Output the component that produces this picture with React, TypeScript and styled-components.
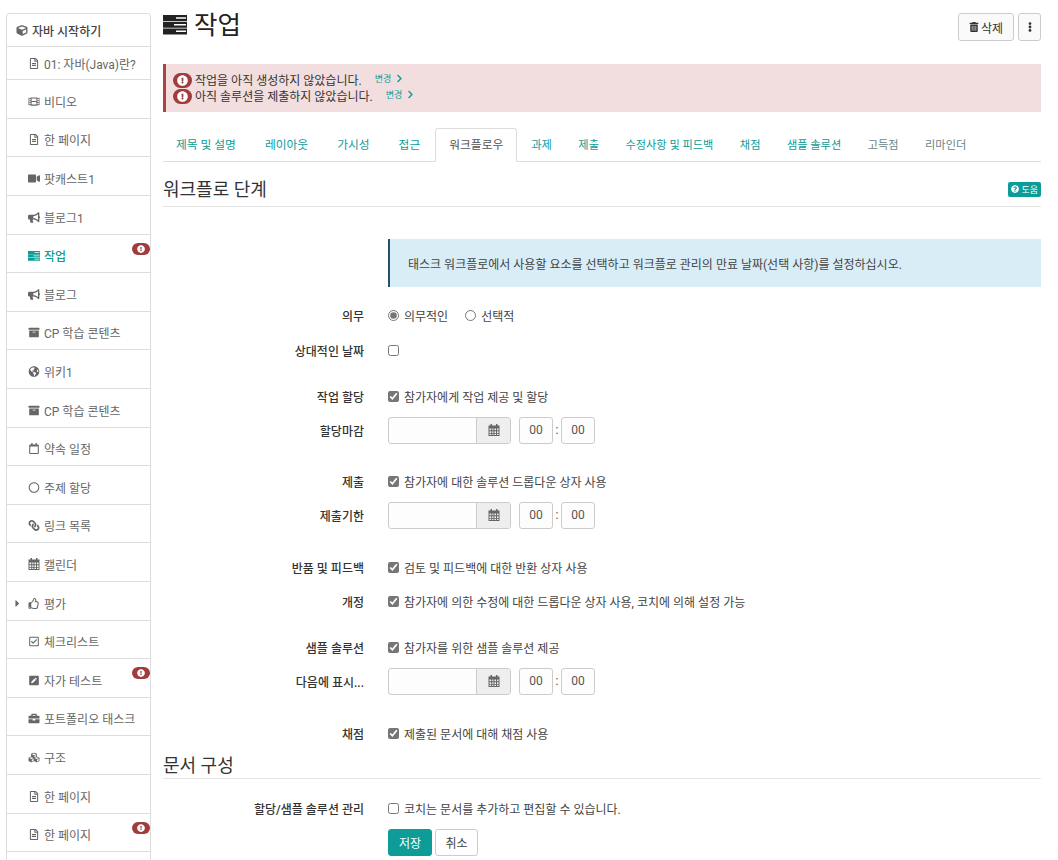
import React from "react";
import styled, { createGlobalStyle } from "styled-components";
import {
  FaArchive,
  FaBriefcase,
  FaBullhorn,
  FaCaretRight,
  FaChevronRight,
  FaCube,
  FaCubes,
  FaExclamationCircle,
  FaEllipsisV,
  FaFilm,
  FaGlobeAmericas,
  FaLink,
  FaPenSquare,
  FaQuestionCircle,
  FaRegCalendar,
  FaRegCheckSquare,
  FaRegCircle,
  FaRegFileAlt,
  FaRegThumbsUp,
  FaTrashAlt,
  FaVideo,
} from "react-icons/fa";

const TEAL = "#0d9c97";
const FONT = `Roboto, "Noto Sans CJK KR", "Noto Sans", sans-serif`;

const GlobalStyle = createGlobalStyle`
  html, body {
    margin: 0;
    padding: 0;
    background: #fff;
    overflow: hidden;
  }
  body {
    font-family: ${FONT};
    font-size: 12px;
    color: #333;
  }
`;

const Page = styled.div`
  display: flex;
  align-items: flex-start;
  gap: 12px;
  width: 1058px;
  height: 860px;
  padding: 13px 17px 0 6px;
  box-sizing: border-box;
  overflow: hidden;
`;

const Sidebar = styled.nav`
  flex: 0 0 145px;
  box-sizing: border-box;
  border: 1px solid #ddd;
  border-radius: 3px 3px 0 0;
`;

const NavRow = styled.div<{ $height: number; $top?: boolean; $active?: boolean }>`
  position: relative;
  display: flex;
  align-items: center;
  gap: 4px;
  box-sizing: border-box;
  height: ${(p) => p.$height}px;
  padding-left: ${(p) => (p.$top ? 9 : 21)}px;
  padding-top: ${(p) => (p.$height > 33 ? 4 : 0)}px;
  border-bottom: 1px solid #ddd;
  font-size: 12px;
  font-weight: ${(p) => (p.$active || p.$top ? 500 : 400)};
  color: ${(p) => (p.$active ? TEAL : p.$top ? "#444" : "#666")};
  white-space: nowrap;

  svg {
    flex: 0 0 12px;
    font-size: 11px;
    color: ${(p) => (p.$active ? TEAL : "#666")};
  }
`;

const NavArrow = styled.span`
  position: absolute;
  left: 5px;
  top: 16px;
  font-size: 9px;
  line-height: 1;
`;

const Pill = styled.span<{ $small?: boolean }>`
  display: inline-flex;
  align-items: center;
  justify-content: center;
  flex: none;
  width: ${(p) => (p.$small ? 18 : 19)}px;
  height: ${(p) => (p.$small ? 12 : 15)}px;
  border-radius: 8px;
  background: #a23b3b;

  svg {
    flex: none;
    color: #fff;
    font-size: ${(p) => (p.$small ? 8 : 11)}px;
  }
`;

const AlertPill = styled(Pill)`
  margin-top: 2px;
`;

const NavBadge = styled.span`
  position: absolute;
  top: 8px;
  right: 0;
  display: flex;
`;

const FlippedLink = styled(FaLink)`
  transform: scaleX(-1);
`;

const Main = styled.main`
  flex: 1;
  min-width: 0;
`;

const TitleBar = styled.header`
  display: flex;
  justify-content: space-between;
  align-items: flex-start;
  height: 51px;
`;

const Title = styled.h1`
  display: flex;
  align-items: center;
  gap: 7px;
  height: 23px;
  margin: 0;
  font-size: 25.5px;
  font-weight: 400;
  color: #222;
`;

const TitleText = styled.span`
  margin-top: -4px;
`;

const TitleActions = styled.div`
  display: flex;
  gap: 4px;
`;

const ToolButton = styled.button<{ $narrow?: boolean }>`
  display: inline-flex;
  align-items: center;
  justify-content: center;
  gap: 2px;
  width: ${(p) => (p.$narrow ? 23 : 56)}px;
  height: 28px;
  padding: 0;
  border: 1px solid #ccc;
  border-radius: 3px;
  background: #fafafa;
  font: inherit;
  font-size: 12px;
  color: #333;

  svg {
    font-size: 10px;
  }
`;

const Alert = styled.section`
  display: flex;
  flex-direction: column;
  justify-content: center;
  height: 48px;
  padding: 0 0 2px 7px;
  box-sizing: border-box;
  border-left: 3px solid #a94442;
  background: #f2dede;
`;

const AlertLine = styled.div`
  display: flex;
  align-items: center;
  height: 16px;
  gap: 3px;
  font-size: 12px;
  color: #333;
`;

const ChangeLink = styled.a`
  display: inline-flex;
  align-items: center;
  gap: 4px;
  margin: -2px 0 0 10px;
  font-size: 9px;
  color: ${TEAL};

  svg {
    font-size: 9px;
  }
`;

const Tabs = styled.div`
  display: flex;
  height: 34px;
  margin-top: 16px;
  box-sizing: border-box;
  border-bottom: 1px solid #ddd;
`;

const Tab = styled.a<{ $active?: boolean; $muted?: boolean; $dense?: boolean }>`
  display: flex;
  align-items: center;
  box-sizing: border-box;
  height: ${(p) => (p.$active ? 34 : 33)}px;
  padding: 0 ${(p) => (p.$dense ? 12 : 13)}px ${(p) => (p.$active ? 3 : 2)}px;
  margin-right: ${(p) => (p.$dense ? 0.5 : 1)}px;
  border: 1px solid ${(p) => (p.$active ? "#ddd" : "transparent")};
  border-bottom-color: ${(p) => (p.$active ? "#fff" : "transparent")};
  border-radius: 3px 3px 0 0;
  background: ${(p) => (p.$active ? "#fff" : "transparent")};
  font-size: ${(p) => (p.$dense ? 11.2 : 11.75)}px;
  white-space: nowrap;
  color: ${(p) => (p.$active ? "#555" : p.$muted ? "#6c8583" : TEAL)};

  &:first-child {
    margin-left: -1px;
  }
`;

const SectionHead = styled.div<{ $top: number; $height: number; $pad: number }>`
  display: flex;
  justify-content: space-between;
  align-items: center;
  box-sizing: border-box;
  height: ${(p) => p.$height}px;
  margin-top: ${(p) => p.$top}px;
  padding-bottom: ${(p) => p.$pad}px;
  border-bottom: 1px solid #e5e5e5;
`;

const SectionTitle = styled.h3`
  margin: 0;
  font-size: 18px;
  font-weight: 400;
  color: #333;
`;

const HelpBadge = styled.a`
  display: inline-flex;
  align-items: center;
  gap: 2px;
  height: 15px;
  margin-top: 2px;
  padding: 0 3px;
  border-radius: 2px;
  background: ${TEAL};
  color: #fff;
  font-size: 9px;

  svg {
    font-size: 8px;
  }
`;

const InfoBox = styled.div`
  display: flex;
  align-items: center;
  height: 48px;
  margin: 32px 0 0 225px;
  padding-left: 18px;
  box-sizing: border-box;
  border-left: 2px solid #245269;
  background: #d9edf7;
  font-size: 12px;
  color: #444;
`;

const FormRow = styled.div<{ $top: number; $tall?: boolean }>`
  display: grid;
  grid-template-columns: 201px 1fr;
  column-gap: 24px;
  align-items: center;
  height: ${(p) => (p.$tall ? 28 : 20)}px;
  margin-top: ${(p) => p.$top}px;
`;

const Label = styled.label`
  text-align: right;
  font-size: 12px;
  font-weight: 500;
  color: #333;
  white-space: nowrap;
`;

const Control = styled.div`
  display: flex;
  align-items: center;
  font-size: 12px;
  color: #444;
  white-space: nowrap;
`;

const Check = styled.input.attrs({ type: "checkbox" })`
  width: 11px;
  height: 11px;
  margin: 0 5px 0 0;
  accent-color: #767676;
`;

const Radio = styled.input.attrs({ type: "radio" })`
  width: 11px;
  height: 11px;
  margin: 0 5px 0 0;
  accent-color: #767676;
`;

const RadioText = styled.span`
  margin-right: 17px;
`;

const DateBox = styled.div`
  display: flex;
  width: 123px;
  height: 27px;
  box-sizing: border-box;
  border: 1px solid #ccc;
  border-radius: 3px;
  overflow: hidden;
  background: #fdfdfd;
`;

const DateInput = styled.div`
  flex: 1;
`;

const DateAddon = styled.div`
  display: flex;
  align-items: center;
  justify-content: center;
  width: 33px;
  border-left: 1px solid #ccc;
  background: #eee;
  color: #666;
`;

const TimeBox = styled.div<{ $first?: boolean }>`
  display: flex;
  align-items: center;
  justify-content: center;
  width: 34px;
  height: 27px;
  margin-left: ${(p) => (p.$first ? 8 : 0)}px;
  box-sizing: border-box;
  border: 1px solid #ccc;
  border-radius: 3px;
  background: #fdfdfd;
  font-size: 12px;
  color: #555;
`;

const TimeColon = styled.span`
  width: 8px;
  text-align: center;
  color: #555;
`;

const Actions = styled.div`
  display: flex;
  gap: 3px;
  margin: 11px 0 0 225px;
`;

const ActionButton = styled.button<{ $primary?: boolean }>`
  height: 27px;
  width: ${(p) => (p.$primary ? 44 : 43)}px;
  padding: 0;
  box-sizing: border-box;
  border: 1px solid ${(p) => (p.$primary ? TEAL : "#ccc")};
  border-radius: 3px;
  background: ${(p) => (p.$primary ? TEAL : "#fff")};
  color: ${(p) => (p.$primary ? "#fff" : "#444")};
  font: inherit;
  font-size: 12px;
`;

// three stacked bars with a slot near the right end, like the old fa-tasks
const TasksIcon = ({ size = 12 }: { size?: number }) => (
  <svg width={size} height={size} viewBox="0 0 24 24" fill="currentColor">
    <path
      fillRule="evenodd"
      d="M0 2h24v6H0zM13 4.2v1.5h10V4.2zM0 8.7h24v6H0zM11 11v1.5h12V11zM0 15.4h24v6H0zM13 17.6v1.5h10v-1.5z"
    />
  </svg>
);

// grid calendar, the package's only has a solid header
const GridCalendar = () => (
  <svg width="12" height="12" viewBox="0 0 24 24" fill="currentColor">
    <path
      fillRule="evenodd"
      d="M5 0h3v3h8V0h3v3h4v21H1V3h4zM3 9v3.5h3.5V9zM8.5 9v3.5H11V9zM13 9v3.5h3V9zM18 9v3.5h3V9zM3 14.5V18h3.5v-3.5zM8.5 14.5V18H11v-3.5zM13 14.5V18h3v-3.5zM18 14.5V18h3v-3.5zM3 19.5V22h3.5v-2.5zM8.5 19.5V22H11v-2.5zM13 19.5V22h3v-2.5zM18 19.5V22h3v-2.5z"
    />
  </svg>
);

type NavItem = {
  label: string;
  icon: React.ReactNode;
  height: number;
  top?: boolean;
  active?: boolean;
  badge?: boolean;
  arrow?: boolean;
};

const navItems: NavItem[] = [
  { label: "자바 시작하기", icon: <FaCube />, height: 33, top: true },
  { label: "01: 자바(Java)란?", icon: <FaRegFileAlt />, height: 33 },
  { label: "비디오", icon: <FaFilm />, height: 39 },
  { label: "한 페이지", icon: <FaRegFileAlt />, height: 38 },
  { label: "팟캐스트1", icon: <FaVideo />, height: 39 },
  { label: "블로그1", icon: <FaBullhorn />, height: 39 },
  { label: "작업", icon: <TasksIcon />, height: 38, active: true, badge: true },
  { label: "블로그", icon: <FaBullhorn />, height: 39 },
  { label: "CP 학습 콘텐츠", icon: <FaArchive />, height: 38 },
  { label: "위키1", icon: <FaGlobeAmericas />, height: 39 },
  { label: "CP 학습 콘텐츠", icon: <FaArchive />, height: 39 },
  { label: "약속 일정", icon: <FaRegCalendar />, height: 38 },
  { label: "주제 할당", icon: <FaRegCircle />, height: 39 },
  { label: "링크 목록", icon: <FlippedLink />, height: 38 },
  { label: "캘린더", icon: <GridCalendar />, height: 39 },
  { label: "평가", icon: <FaRegThumbsUp />, height: 39, arrow: true },
  { label: "체크리스트", icon: <FaRegCheckSquare />, height: 38 },
  { label: "자가 테스트", icon: <FaPenSquare />, height: 39, badge: true },
  { label: "포트폴리오 태스크", icon: <FaBriefcase />, height: 38 },
  { label: "구조", icon: <FaCubes />, height: 39 },
  { label: "한 페이지", icon: <FaRegFileAlt />, height: 39 },
  { label: "한 페이지", icon: <FaRegFileAlt />, height: 38, badge: true },
  { label: "", icon: null, height: 20 },
];

const tabs = [
  "제목 및 설명",
  "레이아웃",
  "가시성",
  "접근",
  "워크플로우",
  "과제",
  "제출",
  "수정사항 및 피드백",
  "채점",
  "샘플 솔루션",
  "고득점",
  "리마인더",
];

const DateTime = () => (
  <Control>
    <DateBox>
      <DateInput />
      <DateAddon>
        <GridCalendar />
      </DateAddon>
    </DateBox>
    <TimeBox $first>00</TimeBox>
    <TimeColon>:</TimeColon>
    <TimeBox>00</TimeBox>
  </Control>
);

const CheckRow = ({ top, label, text, checked = true }: { top: number; label: string; text: string; checked?: boolean }) => (
  <FormRow $top={top}>
    <Label>{label}</Label>
    <Control>
      <Check defaultChecked={checked} />
      {text}
    </Control>
  </FormRow>
);

const DateRow = ({ label }: { label: string }) => (
  <FormRow $top={10} $tall>
    <Label>{label}</Label>
    <DateTime />
  </FormRow>
);

export default function App() {
  return (
    <>
      <GlobalStyle />
      <Page>
        <Sidebar>
          {navItems.map((item, i) => (
            <NavRow key={i} $height={item.height} $top={item.top} $active={item.active}>
              {item.arrow && (
                <NavArrow>
                  <FaCaretRight />
                </NavArrow>
              )}
              {item.icon}
              {item.label}
              {item.badge && (
                <NavBadge>
                  <Pill $small>
                    <FaExclamationCircle />
                  </Pill>
                </NavBadge>
              )}
            </NavRow>
          ))}
        </Sidebar>

        <Main>
          <TitleBar>
            <Title>
              <TasksIcon size={24} />
              <TitleText>작업</TitleText>
            </Title>
            <TitleActions>
              <ToolButton>
                <FaTrashAlt />
                삭제
              </ToolButton>
              <ToolButton $narrow>
                <FaEllipsisV />
              </ToolButton>
            </TitleActions>
          </TitleBar>

          <Alert>
            <AlertLine>
              <AlertPill>
                <FaExclamationCircle />
              </AlertPill>
              작업을 아직 생성하지 않았습니다.
              <ChangeLink>
                변경 <FaChevronRight />
              </ChangeLink>
            </AlertLine>
            <AlertLine>
              <AlertPill>
                <FaExclamationCircle />
              </AlertPill>
              아직 솔루션을 제출하지 않았습니다.
              <ChangeLink>
                변경 <FaChevronRight />
              </ChangeLink>
            </AlertLine>
          </Alert>

          <Tabs>
            {tabs.map((t, i) => (
              <Tab key={t} $active={i === 4} $muted={i >= 10} $dense={i > 4}>
                {t}
              </Tab>
            ))}
          </Tabs>

          <SectionHead $top={11} $height={34} $pad={3}>
            <SectionTitle>워크플로 단계</SectionTitle>
            <HelpBadge>
              <FaQuestionCircle />
              도움
            </HelpBadge>
          </SectionHead>

          <InfoBox>태스크 워크플로에서 사용할 요소를 선택하고 워크플로 관리의 만료 날짜(선택 사항)를 설정하십시오.</InfoBox>

          <FormRow $top={18}>
            <Label>의무</Label>
            <Control>
              <Radio name="duty" defaultChecked />
              <RadioText>의무적인</RadioText>
              <Radio name="duty" />
              <RadioText>선택적</RadioText>
            </Control>
          </FormRow>
          <CheckRow top={15} label="상대적인 날짜" text="" checked={false} />

          <CheckRow top={26} label="작업 할당" text="참가자에게 작업 제공 및 할당" />
          <DateRow label="할당마감" />

          <CheckRow top={27} label="제출" text="참가자에 대한 솔루션 드롭다운 상자 사용" />
          <DateRow label="제출기한" />

          <CheckRow top={28} label="반품 및 피드백" text="검토 및 피드백에 대한 반환 상자 사용" />
          <CheckRow top={14} label="개정" text="참가자에 의한 수정에 대한 드롭다운 상자 사용, 코치에 의해 설정 가능" />

          <CheckRow top={26} label="샘플 솔루션" text="참가자를 위한 샘플 솔루션 제공" />
          <DateRow label="다음에 표시..." />

          <CheckRow top={28} label="채점" text="제출된 문서에 대해 채점 사용" />

          <SectionHead $top={8} $height={28} $pad={2}>
            <SectionTitle>문서 구성</SectionTitle>
          </SectionHead>

          <CheckRow top={19} label="할당/샘플 솔루션 관리" text="코치는 문서를 추가하고 편집할 수 있습니다." checked={false} />

          <Actions>
            <ActionButton $primary>저장</ActionButton>
            <ActionButton>취소</ActionButton>
          </Actions>
        </Main>
      </Page>
    </>
  );
}
